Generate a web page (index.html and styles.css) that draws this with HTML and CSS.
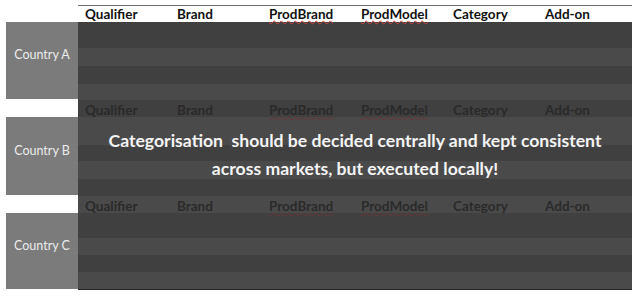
FILE: index.html
```html
<!DOCTYPE html>
<html>
<head>
<meta charset="utf-8">
<link rel="stylesheet" href="styles.css">
</head>
<body>
<div class="sheet">
  <div class="head-row top">
    <div class="gutter"></div>
    <div class="cols">
      <span class="col">Qualifier</span>
      <span class="col">Brand</span>
      <span class="col"><span class="spell">ProdBrand</span></span>
      <span class="col"><span class="spell">ProdModel</span></span>
      <span class="col">Category</span>
      <span class="col">Add-on</span>
    </div>
  </div>

  <div class="group ga">
    <div class="country">Country A</div>
    <div class="rows">
      <div class="row dark r1"></div>
      <div class="row light r2"></div>
      <div class="row dark r3"></div>
      <div class="row light r4"></div>
    </div>
  </div>

  <div class="head-row dim">
    <div class="gutter"></div>
    <div class="cols dark">
      <span class="col">Qualifier</span>
      <span class="col">Brand</span>
      <span class="col"><span class="spell">ProdBrand</span></span>
      <span class="col"><span class="spell">ProdModel</span></span>
      <span class="col">Category</span>
      <span class="col">Add-on</span>
    </div>
  </div>

  <div class="group gb">
    <div class="country">Country B</div>
    <div class="rows">
      <div class="row light r1"></div>
      <div class="row dark r2"></div>
      <div class="row light r3"></div>
      <div class="row dark r4"></div>
    </div>
  </div>

  <div class="head-row dim">
    <div class="gutter"></div>
    <div class="cols light">
      <span class="col">Qualifier</span>
      <span class="col">Brand</span>
      <span class="col"><span class="spell">ProdBrand</span></span>
      <span class="col"><span class="spell">ProdModel</span></span>
      <span class="col">Category</span>
      <span class="col">Add-on</span>
    </div>
  </div>

  <div class="group gc">
    <div class="country">Country C</div>
    <div class="rows">
      <div class="row dark r1"></div>
      <div class="row light r2"></div>
      <div class="row dark r3"></div>
      <div class="row light r4"></div>
    </div>
  </div>

  <div class="message">
    <p>Categorisation&nbsp; should be decided centrally and kept consistent</p>
    <p>across markets, but executed locally!</p>
  </div>
</div>
</body>
</html>
```

FILE: styles.css
```css
html, body {
  margin: 0;
  padding: 0;
  background: #ffffff;
}

.sheet {
  position: relative;
  width: 640px;
  height: 297px;
  padding-top: 5px;
  box-sizing: border-box;
  font-family: Lato, "Open Sans", sans-serif;
}

.head-row {
  display: flex;
  height: 17px;
  position: relative;
  z-index: 1;
}

.gutter {
  width: 78px;
  flex: none;
}

.cols {
  display: flex;
  width: 554px;
  flex: none;
  height: 17px;
  box-sizing: border-box;
}

.top .cols {
  border-top: 1px solid #6a6a6a;
  background: #ffffff;
}

.cols.dark { background: #404040; }
.cols.light { background: #4a4a4a; }

.col {
  width: 92px;
  flex: none;
  padding-left: 7px;
  padding-top: 1px;
  box-sizing: border-box;
  font-weight: 700;
  font-size: 13.5px;
  line-height: 15px;
  color: #111111;
  white-space: nowrap;
}

.dim .col { padding-top: 3px; color: #2a2a2a; }

.spell {
  text-decoration: underline wavy #d04040;
  text-decoration-thickness: 1px;
  text-underline-offset: 1px;
}
.dim .spell { text-decoration-color: #6a3434; }

.group {
  display: flex;
}

.country {
  margin-left: 6px;
  width: 72px;
  flex: none;
  background: #7b7b7b;
  color: #ececec;
  font-family: Lato, "Open Sans", sans-serif;
  font-size: 12.5px;
  display: flex;
  align-items: center;
  justify-content: center;
  padding-bottom: 12px;
  box-sizing: border-box;
  margin-bottom: 1px;
}

.rows {
  width: 554px;
  flex: none;
  display: flex;
  flex-direction: column;
}

.row.dark { background: #404040; }
.row.light { background: #4a4a4a; }

.ga .r1 { height: 26px; }
.ga .r2 { height: 18px; }
.ga .r3 { height: 18px; }
.ga .r4 { height: 16px; }

.gb .r1 { height: 28px; }
.gb .r2 { height: 16px; }
.gb .r3 { height: 18px; }
.gb .r4 { height: 17px; }

.gc .r1 { height: 25px; }
.gc .r2 { height: 17px; }
.gc .r3 { height: 17px; }
.gc .r4 { height: 17px; }

.gc .rows { border-bottom: 1px solid #262626; }

.message {
  position: absolute;
  left: 78px;
  top: 127px;
  width: 554px;
  text-align: center;
  color: #f4f4f4;
  font-weight: 700;
  font-size: 17.6px;
  line-height: 28px;
  z-index: 2;
}

.message p {
  margin: 0;
  white-space: nowrap;
}
```
